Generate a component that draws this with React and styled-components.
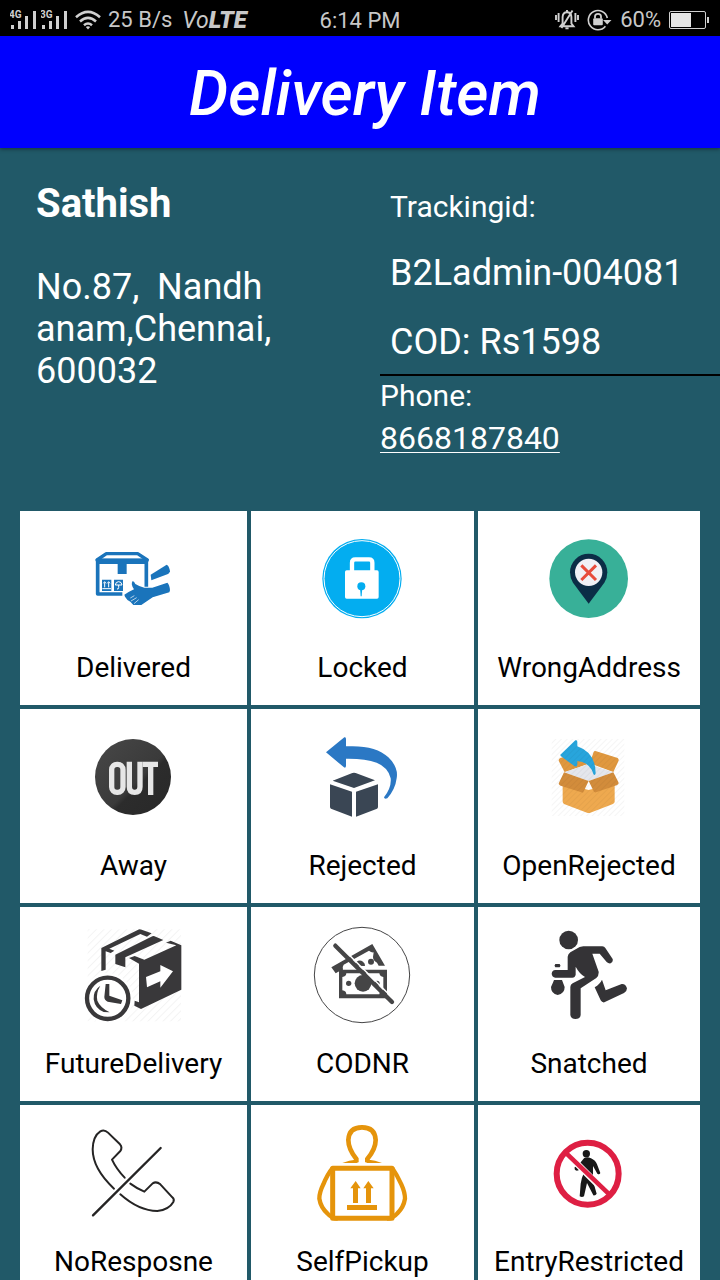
import React from "react";
import styled, { createGlobalStyle } from "styled-components";

const GlobalStyle = createGlobalStyle`
  *, *::before, *::after { box-sizing: border-box; }
  body {
    margin: 0;
    background: #215968;
    font-family: Roboto, "Liberation Sans", sans-serif;
  }
`;

const Screen = styled.div`
  display: flex;
  flex-direction: column;
  height: 100vh;
  background: #215968;
`;

const StatusBar = styled.div`
  display: grid;
  grid-template-columns: 1fr auto 1fr;
  align-items: center;
  flex: none;
  height: 36px;
  padding: 0 10px;
  background: #000;
  color: #c8c8c8;
  font-size: 22px;
  line-height: 36px;
  white-space: nowrap;
`;

const StatusGroup = styled.div`
  display: flex;
  align-items: center;
  justify-content: ${(p) => (p.$end ? "flex-end" : "flex-start")};
  gap: ${(p) => p.$gap}px;

  svg { display: block; flex: none; }
`;

const Clock = styled.time`
  padding-top: 2px;
`;

const NetworkText = styled.div`
  display: flex;
  gap: 10px;
  padding-top: 2px;
`;

const Volte = styled.span`
  font-style: italic;
  font-size: 23px;
  b { font-weight: 900; font-size: 24px; }
`;

const TitleBar = styled.header`
  position: relative;
  display: flex;
  align-items: center;
  justify-content: center;
  flex: none;
  height: 112px;
  padding: 4px 0 0 10px;
  background: #0000fe;
  box-shadow: 0 1px 4px rgba(0, 0, 0, 0.45);
`;

const Title = styled.h1`
  margin: 0;
  color: #fff;
  font-size: 62px;
  font-style: italic;
  font-weight: 500;
  line-height: 72px;
`;

const Content = styled.main`
  flex: 1;
  min-height: 0;
  overflow-y: auto;
  scrollbar-width: none;
`;

const Details = styled.section`
  display: grid;
  grid-template-columns: 19fr 17fr;
  padding: 32px 0 52px;
  color: #fff;
`;

const Recipient = styled.div`
  padding-left: 36px;
`;

const Name = styled.h2`
  margin: 0 0 38px;
  font-size: 40px;
  font-weight: 700;
  line-height: 48px;
`;

const Address = styled.address`
  font-size: 36px;
  font-style: normal;
  line-height: 42px;
  white-space: pre;
`;

const Shipment = styled.div`
  display: flex;
  flex-direction: column;
  gap: 27px;
  padding: 9px 10px 11px;
  border-bottom: 2px solid #000;
`;

const Caption = styled.span`
  font-size: 30px;
  line-height: 36px;
`;

const Value = styled.span`
  font-size: 36px;
  line-height: 42px;
`;

const Phone = styled.div`
  display: flex;
  flex-direction: column;
  align-items: flex-start;
  gap: 3px;
  padding-top: 2px;
`;

const PhoneLink = styled.a`
  color: #fff;
  font-size: 32px;
  line-height: 42px;
  text-decoration: underline;
  text-decoration-thickness: 1px;
  text-underline-offset: 3px;
  text-decoration-skip-ink: none;
`;

const StatusGrid = styled.section`
  display: grid;
  grid-template-columns: 227fr 223fr 222fr;
  gap: 4px;
  padding: 0 20px;
`;

const Tile = styled.button`
  display: flex;
  flex-direction: column;
  align-items: center;
  gap: 17px;
  min-width: 0;
  padding: 12px 0 20px;
  border: 0;
  background: #fff;
  color: #000;
  font-family: inherit;
  font-size: 28px;
  line-height: 34px;
  cursor: pointer;
`;

const TileIcon = styled.svg`
  display: block;
  width: 111px;
  height: 111px;
`;

const SignalText = styled.text`
  font-family: Roboto, sans-serif;
  font-size: 10px;
  font-weight: 700;
`;

function Signal({ label }) {
  return (
    <svg width="27" height="20" viewBox="0 0 27 20" fill="#d0d0d0">
      <SignalText x="-1" y="8">{label}</SignalText>
      <rect x="1" y="15" width="3" height="4" />
      <rect x="8" y="11" width="3" height="8" />
      <rect x="15" y="6" width="3" height="13" />
      <rect x="23" y="1" width="3" height="18" />
    </svg>
  );
}

function Wifi() {
  return (
    <svg width="26" height="20" viewBox="0 0 26 20" fill="none" stroke="#d0d0d0" strokeWidth="2.6">
      <path d="M1 7.2Q13-3.4 25 7.2M5 11.4Q13 4.4 21 11.4M9 15.2Q13 11.8 17 15.2" />
      <path d="M10.8 17L13 19.6 15.2 17Q13 15.4 10.8 17Z" fill="#d0d0d0" stroke="none" />
    </svg>
  );
}

function Silent() {
  return (
    <svg width="24" height="22" viewBox="0 0 24 22" fill="none" stroke="#d0d0d0" strokeWidth="1.9">
      <path d="M1 6V11M3.6 4V13M20.4 4V13M23 6V11" />
      <path d="M5.5 17.2L7.6 14.5V8Q7.8 3.2 12 3.2T16.4 8V14.5L18.5 17.2ZM10.4 19.4H13.6M17.5 1.5L6.5 19" />
      <path d="M12 1V3" />
    </svg>
  );
}

function RotationLock() {
  return (
    <svg width="25" height="22" viewBox="0 0 25 22" fill="none" stroke="#d0d0d0" strokeWidth="1.6">
      <path d="M20.3 9A9.6 9.6 0 1 0 18.4 17.2" />
      <path d="M16 11H24.5L20.2 15.4Z" fill="#d0d0d0" stroke="none" />
      <rect x="6.2" y="9.2" width="9.6" height="7" rx="1" fill="#d0d0d0" stroke="none" />
      <path d="M8 9.5V7.5Q8 4.8 11 4.8T14 7.5V9.5" strokeWidth="1.8" />
    </svg>
  );
}

function Battery() {
  return (
    <svg width="41" height="18" viewBox="0 0 41 18">
      <rect x="0.5" y="0.5" width="36" height="17" rx="1.5" fill="none" stroke="#d0d0d0" />
      <rect x="2" y="2" width="20" height="14" fill="#e6e6e6" />
      <rect x="38" y="6" width="2" height="6" fill="#d0d0d0" />
    </svg>
  );
}

function DeliveredIcon() {
  return (
    <TileIcon viewBox="-6 -21 333 333" fill="#1a74bb">
      <g fill="none" stroke="#1a74bb" strokeLinejoin="round">
        <path d="M127 192H53V91H199V170" strokeWidth="11" />
        <path d="M51 90L79 71H173L202 90" strokeWidth="10" strokeLinecap="round" />
      </g>
      <path d="M50 86H204V102H50ZM113 98H140V132H113Z" />
      <path d="M66 149H94V183H66ZM102 149H129V183H102Z" />
      <g fill="none" stroke="#fff" strokeWidth="3">
        <path d="M67 176H93M74 172V157M86 172V157M70 160L74 155 78 160M82 160L86 155 90 160" />
        <path d="M106 165Q107 155 116 155T126 165ZM116 165V173Q116 178 111 177" />
      </g>
      <path d="M212 134L260 104Q267 106 270 124Q268 130 264 132L214 151Z" />
      <path d="M133 194Q149 184 162 178Q151 162 158 153Q163 154 166 162Q177 169 193 173H217L262 158Q269 164 270 181L268 187L218 202L184 225H160L151 215Q141 211 135 200Z" />
      <path d="M151 204L163 197M153 213L170 203M162 221L176 209" stroke="#fff" strokeWidth="2" />
    </TileIcon>
  );
}

function LockedIcon() {
  return (
    <TileIcon viewBox="-9 -21 333 333">
      <circle cx="156" cy="146" r="119" fill="#03adf0" />
      <circle cx="156" cy="146" r="114" fill="none" stroke="#fff" strokeWidth="3" />
      <path d="M126 126V98Q126 88 136 88H177Q187 88 187 98V126" fill="none" stroke="#fff" strokeWidth="13" />
      <rect x="105" y="121" width="101" height="85" rx="5" fill="#fff" />
      <circle cx="154" cy="169" r="12" fill="#03adf0" />
      <path d="M150 172H157L155 199H152Z" fill="#03adf0" />
    </TileIcon>
  );
}

function WrongAddressIcon() {
  return (
    <TileIcon viewBox="673 -21 333 333">
      <circle cx="837" cy="146" r="118" fill="#38b098" />
      <path d="M837 221L790 158Q781 144 781 127A56 56 0 0 1 893 127Q893 144 884 158Z" fill="#0b2d46" />
      <circle cx="837" cy="127" r="41" fill="#f0f1f6" />
      <path d="M815 106L859 150M859 106L815 150" stroke="#e74c3c" strokeWidth="9" />
    </TileIcon>
  );
}

function AwayIcon() {
  return (
    <TileIcon viewBox="-6 -27 333 333">
      <defs>
        <linearGradient id="awayDisc" x1="0" y1="0" x2="1" y2="1">
          <stop offset="0" stopColor="#484848" />
          <stop offset="0.55" stopColor="#3a3a3a" />
          <stop offset="0.6" stopColor="#2c2c2c" />
          <stop offset="1" stopColor="#282828" />
        </linearGradient>
      </defs>
      <circle cx="159" cy="141" r="114" fill="url(#awayDisc)" />
      <g fill="none" stroke="#e6e6e6" strokeWidth="16">
        <rect x="95" y="103" width="34" height="84" rx="16" />
        <path d="M148 95V170Q148 187 164 187T180 170V95" />
        <path d="M188 103H234M212 103V195" />
      </g>
    </TileIcon>
  );
}

function RejectedIcon() {
  return (
    <TileIcon viewBox="-9 -27 333 333">
      <path d="M48 67L103 22Q108 20 108 27V49Q195 44 235 82Q266 112 260 145Q256 178 232 205Q223 209 222 202Q245 172 242 145Q235 112 200 98Q165 85 108 86V108Q107 115 102 112Z" fill="#2b78c4" />
      <g fill="#3a4654">
        <path d="M68 152L127 129Q132 127 137 129L195 151 132 174Z" />
        <path d="M60 163L126 185V260L63 236Q60 234 60 230Z" />
        <path d="M204 163L138 185V260L201 236Q204 234 204 230Z" />
      </g>
    </TileIcon>
  );
}

function OpenRejectedIcon() {
  return (
    <TileIcon viewBox="673 -27 333 333">
      <defs>
        <pattern id="hatch" width="12" height="12" patternUnits="userSpaceOnUse" patternTransform="rotate(45)">
          <rect width="2" height="12" fill="#000" opacity="0.06" />
        </pattern>
      </defs>
      <path d="M759 160L837 180 915 160V216Q914 220 908 223L842 248Q837 250 832 248L765 223Q759 220 759 215Z" fill="#eea94f" />
      <path d="M747 92Q747 86 752 84L820 62 841 100 765 127Z" fill="#e0983f" />
      <path d="M840 100L852 66Q854 62 860 64L924 84Q929 88 926 94L911 126Z" fill="#e0983f" />
      <path d="M763 127L837 102 911 127 837 153Z" fill="#e4e6ec" />
      <path d="M763 127L837 153 820 188 753 167Q745 163 748 158Z" fill="#d28c3b" />
      <path d="M911 127L837 153 852 184Q855 189 861 186L921 166Q929 162 926 156Z" fill="#d28c3b" />
      <path d="M752 74L797 31Q803 29 803 36V49Q858 68 858 130Q856 139 851 132Q842 98 803 93V104Q802 112 795 109L756 80Q751 77 752 74Z" fill="#28a5dc" />
      <rect x="726" y="27" width="218" height="231" fill="url(#hatch)" />
    </TileIcon>
  );
}

function FutureDeliveryIcon() {
  return (
    <TileIcon viewBox="9 -3 333 333">
      <defs>
        <pattern id="hatchLight" width="16" height="16" patternUnits="userSpaceOnUse" patternTransform="rotate(45)">
          <rect width="3" height="16" fill="#f3f3f3" />
        </pattern>
      </defs>
      <rect x="38" y="28" width="280" height="276" fill="url(#hatchLight)" />
      <g fill="#39383a">
        <path d="M79 84L188 30Q193 26 200 29L230 40 216 50 196 42 103 86 118 92 107 99 92 94V149L79 153Z" />
        <path d="M121 104L229 50Q235 46 242 50L265 60 151 112V142L121 132Z" />
        <path d="M162 114L179 108 208 119 304 76 273 68 287 62 319 76V209L198 267 178 257 179 242 192 247V131Z" />
      </g>
      <path d="M213 171L256 154V135L294 154 256 203V184L216 202Z" fill="#fff" />
      <circle cx="98" cy="235" r="76" fill="#fff" />
      <circle cx="98" cy="235" r="62" fill="none" stroke="#39383a" strokeWidth="13" />
      <path d="M92 192H103V227L142 241 138 252 98 245Q88 241 88 231Z" fill="#39383a" />
      <path d="M76 197Q54 212 56 238Q60 266 86 276L104 277Q75 262 67 242Q62 220 76 197Z" fill="#39383a" />
    </TileIcon>
  );
}

function CodnrIcon() {
  return (
    <TileIcon viewBox="6 -3 333 333">
      <circle cx="171" cy="165" r="143" fill="none" stroke="#454546" strokeWidth="3" />
      <g fill="#454546">
        <path fillRule="evenodd" d="M79 142L202 72 240 137H221L216 128Q204 122 204 111L206 97Q199 98 192 92L116 134Q111 141 114 149L100 155 92 160Z" />
        <path d="M147 137Q158 114 174 125Q181 130 180 138Z" />
        <circle cx="198" cy="125" r="9" />
        <path fillRule="evenodd" d="M102 149H246V235H102ZM124 160Q124 169 112 171V211Q124 213 124 223H223Q224 213 235 211V171Q224 169 223 160Z" />
        <circle cx="174" cy="190" r="25" />
        <circle cx="131" cy="190" r="8" />
        <circle cx="216" cy="190" r="8" />
      </g>
      <path d="M99 72L272 243" stroke="#fff" strokeWidth="5" />
      <path d="M91 77L261 246" stroke="#454546" strokeWidth="13" strokeLinecap="round" />
    </TileIcon>
  );
}

function SnatchedIcon() {
  return (
    <TileIcon viewBox="-17 -3 333 333" fill="#343336">
      <circle cx="87" cy="60" r="28" />
      <path d="M131 79H188Q194 79 197 84L219 117Q221 126 213 130Q206 131 201 126L180 101H158L177 155Q178 167 170 174L123 205V285Q122 297 107 297Q94 297 92 285V201Q92 194 99 190L136 171Q119 161 108 140V164Q106 173 98 173H47Q37 171 36 161Q37 151 47 150H84V110Q85 102 92 97L120 81Z" />
      <path d="M47 132H60Q65 137 60 142H47Q42 137 47 132ZM43 180H67Q70 188 75 201Q75 221 54 225Q34 221 34 201Q40 188 43 180Z" />
      <path d="M165 202Q181 192 187 179L198 211 246 192Q258 191 262 205Q262 214 253 219L194 247Q187 248 183 241Z" />
    </TileIcon>
  );
}

function NoResponseIcon() {
  return (
    <TileIcon viewBox="-6 -9 333 333" fill="none" stroke="#252424" strokeWidth="6" strokeLinecap="round" strokeLinejoin="round">
      <path d="M102 206Q38 146 38 88Q39 48 61 34Q73 27 84 38L120 73Q128 82 121 93L96 119Q109 147 134 173" />
      <path d="M121 223Q177 273 232 273Q267 269 280 246Q284 238 277 232L241 193Q229 183 218 190L193 215Q171 206 151 191" />
      <path d="M39 286L242 84" strokeWidth="7" />
    </TileIcon>
  );
}

function SelfPickupIcon() {
  return (
    <TileIcon viewBox="6 6 333 333" fill="#e5940b">
      <g fill="none" stroke="#e5940b">
        <path d="M154 142V132Q130 102 130 75Q132 37 171 37Q210 37 212 75Q212 102 187 132V142" strokeWidth="14" />
        <rect x="83" y="160" width="178" height="150" strokeWidth="15" strokeLinejoin="round" />
        <path d="M82 160Q67 178 55 208Q43 232 43 251Q47 277 67 295Q81 311 98 311" strokeWidth="13" />
        <path d="M262 160Q276 180 289 208Q300 232 300 251Q296 277 277 295Q263 311 246 311" strokeWidth="13" />
      </g>
      <path d="M112 144Q134 135 151 134L160 141 155 144ZM231 144Q209 135 192 134L182 141 187 144Z" />
      <path d="M152 198L167 220H159V264H144V220H136ZM190 198L206 220H198V264H183V220H175ZM126 270H216V285H126Z" />
    </TileIcon>
  );
}

function EntryRestrictedIcon() {
  return (
    <TileIcon viewBox="688 6 333 333">
      <g fill="#181818">
        <circle cx="845" cy="116" r="11" />
        <path d="M838 130Q846 124 859 130Q873 136 877 148L887 174Q884 180 878 176L865 153V198L876 236Q873 242 866 241L847 204 838 244Q832 248 825 244L828 206Q831 188 836 178L835 151 822 166Q813 169 810 163V156L819 153Z" />
      </g>
      <path d="M786 115L911 240" stroke="#fff" strokeWidth="20" />
      <g fill="none" stroke="#de1f43">
        <path d="M782 112L914 238" strokeWidth="14" />
        <circle cx="849" cy="176" r="93" strokeWidth="18" />
      </g>
    </TileIcon>
  );
}

const STATUSES = [
  ["Delivered", DeliveredIcon],
  ["Locked", LockedIcon],
  ["WrongAddress", WrongAddressIcon],
  ["Away", AwayIcon],
  ["Rejected", RejectedIcon],
  ["OpenRejected", OpenRejectedIcon],
  ["FutureDelivery", FutureDeliveryIcon],
  ["CODNR", CodnrIcon],
  ["Snatched", SnatchedIcon],
  ["NoResposne", NoResponseIcon],
  ["SelfPickup", SelfPickupIcon],
  ["EntryRestricted", EntryRestrictedIcon],
];

export default function App() {
  return (
    <Screen>
      <GlobalStyle />
      <StatusBar>
        <StatusGroup $gap={7}>
          <StatusGroup $gap={4}>
            <Signal label="4G" />
            <Signal label="3G" />
          </StatusGroup>
          <Wifi />
          <NetworkText>
            <span>25 B/s</span>
            <Volte>Vo<b>LTE</b></Volte>
          </NetworkText>
        </StatusGroup>
        <Clock>6:14 PM</Clock>
        <StatusGroup $end $gap={8}>
          <Silent />
          <RotationLock />
          <span>60%</span>
          <Battery />
        </StatusGroup>
      </StatusBar>
      <TitleBar>
        <Title>Delivery Item</Title>
      </TitleBar>
      <Content>
        <Details>
          <Recipient>
            <Name>Sathish</Name>
            <Address>{"No.87,  Nandh\nanam,Chennai,\n600032"}</Address>
          </Recipient>
          <div>
            <Shipment>
              <Caption>Trackingid:</Caption>
              <Value>B2Ladmin-004081</Value>
              <Value>COD: Rs1598</Value>
            </Shipment>
            <Phone>
              <Caption>Phone:</Caption>
              <PhoneLink href="tel:8668187840">8668187840</PhoneLink>
            </Phone>
          </div>
        </Details>
        <StatusGrid>
          {STATUSES.map(([label, Icon]) => (
            <Tile key={label} type="button">
              <Icon />
              <span>{label}</span>
            </Tile>
          ))}
        </StatusGrid>
      </Content>
    </Screen>
  );
}
